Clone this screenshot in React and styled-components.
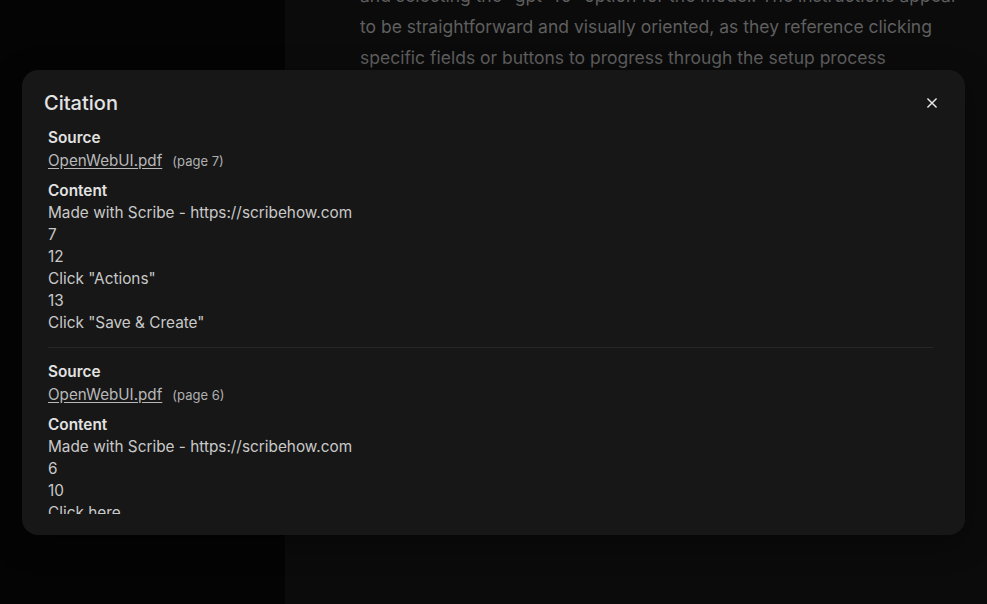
import React from "react";
import styled, { createGlobalStyle } from "styled-components";

const Global = createGlobalStyle`
  html, body { margin: 0; padding: 0; background: #0b0b0b; }
  body { font-family: Inter, "Noto Sans", "Liberation Sans", sans-serif; overflow: hidden; }
  * { box-sizing: border-box; }
`;

const Page = styled.div`
  display: flex;
  width: 987px;
  height: 604px;
  overflow: hidden;
  position: relative;
`;

const Sidebar = styled.aside`
  width: 285px;
  flex: none;
  background: #040404;
`;

const Main = styled.main`
  flex: 1;
  background: #0b0b0b;
  padding-left: 75px;
  overflow: hidden;
`;

const Prose = styled.p`
  margin: -20px 0 0;
  font-size: 17.5px;
  line-height: 31px;
  color: #5f5f5f;
  white-space: nowrap;
`;

const Modal = styled.div`
  position: absolute;
  left: 22px;
  top: 70px;
  width: 943px;
  height: 465px;
  background: #171717;
  border-radius: 16px;
  box-shadow: 0 8px 30px rgba(0, 0, 0, 0.4);
  display: flex;
  flex-direction: column;
  padding: 19px 32px 21px 26px;
`;

const Header = styled.div`
  display: flex;
  align-items: center;
  justify-content: space-between;
  height: 28px;
  margin-left: -4px;
  margin-bottom: 10px;
`;

const Title = styled.h2`
  margin: 0;
  font-size: 20px;
  font-weight: 500;
  color: #e3e3e3;
  line-height: 28px;
`;

const CloseButton = styled.button`
  background: none;
  border: none;
  padding: 0;
  width: 16px;
  height: 16px;
  margin-right: -7px;
  display: flex;
  align-items: center;
  justify-content: center;
  color: #e6e6e6;
  cursor: pointer;
`;

const Scroll = styled.div`
  flex: 1;
  overflow: hidden;
  display: flex;
  flex-direction: column;
`;

const Section = styled.section`
  display: flex;
  flex-direction: column;
  gap: 8px;
  padding-bottom: 13px;
  border-bottom: ${(p) => (p.$divider ? "1px solid #262626" : "none")};
  margin-bottom: ${(p) => (p.$divider ? "13px" : "0")};
`;

const Field = styled.div`
  display: flex;
  flex-direction: column;
`;

const Label = styled.div`
  font-size: 15.35px;
  font-weight: 600;
  line-height: 22px;
  color: #e2e2e2;
`;

const SourceRow = styled.div`
  display: flex;
  align-items: baseline;
  gap: 10px;
  line-height: 22px;
  margin-top: 1px;
`;

const Link = styled.a`
  font-size: 15.2px;
  color: #b9b9b9;
  text-decoration: underline;
  text-underline-offset: 2px;
`;

const PageNum = styled.span`
  font-size: 13px;
  color: #b0b0b0;
`;

const Line = styled.div`
  font-size: 15.35px;
  line-height: 22px;
  color: #c9c9c9;
  white-space: pre;
`;

const citations = [
  {
    page: 7,
    lines: ["Made with Scribe - https://scribehow.com", "7", "12", 'Click "Actions"', "13", 'Click "Save & Create"'],
  },
  {
    page: 6,
    lines: ["Made with Scribe - https://scribehow.com", "6", "10", "Click here", "12", 'Click "Workspace"'],
  },
];

export default function App() {
  return (
    <>
      <Global />
      <Page>
        <Sidebar />
        <Main>
          <Prose>
            and selecting the "gpt-4o" option for the model. The instructions appear
            <br />
            to be straightforward and visually oriented, as they reference clicking
            <br />
            specific fields or buttons to progress through the setup process
          </Prose>
        </Main>
        <Modal>
          <Header>
            <Title>Citation</Title>
            <CloseButton aria-label="Close">
              <svg width="14" height="14" viewBox="0 0 24 24" fill="none" stroke="currentColor" strokeWidth="2.6" strokeLinecap="round">
                <path d="M5 5l14 14M19 5L5 19" />
              </svg>
            </CloseButton>
          </Header>
          <Scroll>
            {citations.map((c, i) => (
              <Section key={i} $divider={i < citations.length - 1}>
                <Field>
                  <Label>Source</Label>
                  <SourceRow>
                    <Link>OpenWebUI.pdf</Link>
                    <PageNum>(page {c.page})</PageNum>
                  </SourceRow>
                </Field>
                <Field>
                  <Label>Content</Label>
                  {c.lines.map((l, j) => (
                    <Line key={j}>{l}</Line>
                  ))}
                </Field>
              </Section>
            ))}
          </Scroll>
        </Modal>
      </Page>
    </>
  );
}
